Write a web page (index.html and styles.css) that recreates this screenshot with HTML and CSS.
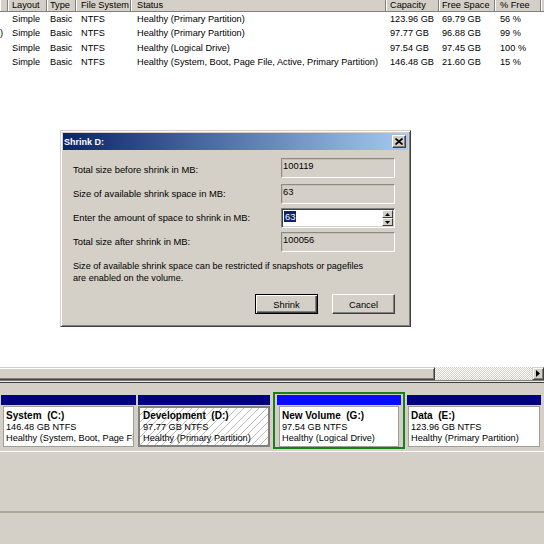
FILE: index.html
```html
<!DOCTYPE html>
<html>
<head>
<meta charset="utf-8">
<link rel="stylesheet" href="styles.css">
</head>
<body>
<div class="list">
  <div class="grid hdr">
    <div class="c"></div><div class="c">Layout</div><div class="c">Type</div><div class="c">File System</div><div class="c">Status</div><div class="c">Capacity</div><div class="c">Free Space</div><div class="c">% Free</div><div class="c"></div>
  </div>
  <div class="grid row">
    <div class="c vol"></div><div class="c">Simple</div><div class="c">Basic</div><div class="c">NTFS</div><div class="c">Healthy (Primary Partition)</div><div class="c">123.96 GB</div><div class="c">69.79 GB</div><div class="c">56 %</div><div class="c"></div>
  </div>
  <div class="grid row">
    <div class="c vol">)</div><div class="c">Simple</div><div class="c">Basic</div><div class="c">NTFS</div><div class="c">Healthy (Primary Partition)</div><div class="c">97.77 GB</div><div class="c">96.88 GB</div><div class="c">99 %</div><div class="c"></div>
  </div>
  <div class="grid row">
    <div class="c vol"></div><div class="c">Simple</div><div class="c">Basic</div><div class="c">NTFS</div><div class="c">Healthy (Logical Drive)</div><div class="c">97.54 GB</div><div class="c">97.45 GB</div><div class="c">100 %</div><div class="c"></div>
  </div>
  <div class="grid row">
    <div class="c vol"></div><div class="c">Simple</div><div class="c">Basic</div><div class="c">NTFS</div><div class="c">Healthy (System, Boot, Page File, Active, Primary Partition)</div><div class="c">146.48 GB</div><div class="c">21.60 GB</div><div class="c">15 %</div><div class="c"></div>
  </div>
</div>

<div class="hscroll">
  <div class="thumb"></div>
  <div class="track"></div>
  <div class="arrow"><svg width="4" height="7" viewBox="0 0 4 7"><path d="M0 0 L4 3.5 L0 7 Z" fill="#000"/></svg></div>
</div>
<div class="split"></div>

<div class="graph">
  <div class="disks">
    <div class="part sys">
      <div class="bar"></div>
      <div class="box"><b>System  (C:)</b><br>146.48 GB NTFS<br>Healthy (System, Boot, Page File, Active, Primary Partition)</div>
    </div>
    <div class="part dev">
      <div class="bar"></div>
      <div class="box hatch"><b>Development  (D:)</b><br>97.77 GB NTFS<br>Healthy (Primary Partition)</div>
    </div>
    <div class="part nv">
      <div class="green">
        <div class="bar bright"></div>
        <div class="box"><b>New Volume  (G:)</b><br>97.54 GB NTFS<br>Healthy (Logical Drive)</div>
      </div>
    </div>
    <div class="part data">
      <div class="bar"></div>
      <div class="box"><b>Data  (E:)</b><br>123.96 GB NTFS<br>Healthy (Primary Partition)</div>
    </div>
  </div>
  <div class="gap"></div>
  <div class="sline"></div>
</div>

<div class="dialog">
  <div class="title">
    <span class="ttext">Shrink D:</span>
    <div class="close"><svg width="8" height="7" viewBox="0 0 8 7"><path d="M0.5 0.5 L7.5 6.5 M7.5 0.5 L0.5 6.5" stroke="#000" stroke-width="1.7" fill="none"/></svg></div>
  </div>
  <div class="dbody">
    <div class="fields">
      <div class="lbl first">Total size before shrink in MB:</div>
      <div class="ro">100119</div>
      <div class="lbl">Size of available shrink space in MB:</div>
      <div class="ro">63</div>
      <div class="lbl">Enter the amount of space to shrink in MB:</div>
      <div class="edit">
        <div class="etext"><span class="selected">63</span></div>
        <div class="spin">
          <div class="sbtn"><svg width="5" height="3" viewBox="0 0 5 3"><path d="M2.5 0 L5 3 L0 3 Z" fill="#000"/></svg></div>
          <div class="sbtn"><svg width="5" height="3" viewBox="0 0 5 3"><path d="M0 0 L5 0 L2.5 3 Z" fill="#000"/></svg></div>
        </div>
      </div>
      <div class="lbl">Total size after shrink in MB:</div>
      <div class="ro">100056</div>
    </div>
    <p class="note">Size of available shrink space can be restricted if snapshots or pagefiles<br>are enabled on the volume.</p>
    <div class="buttons">
      <div class="btn default">Shrink</div>
      <div class="btn">Cancel</div>
    </div>
  </div>
</div>
</body>
</html>
```

FILE: styles.css
```css
* { box-sizing: border-box; }

body {
  margin: 0;
  width: 544px;
  height: 544px;
  overflow: hidden;
  position: relative;
  background: #d4d0c8;
  font-family: "Liberation Sans", Arial, sans-serif;
  font-size: 9.2px;
  color: #000;
}

/* ---------- volume list ---------- */
.list {
  height: 367px;
  background: #fff;
  overflow: hidden;
}

.grid {
  display: grid;
  grid-template-columns: 8px 39px 29px 55px 255px 53px 56px 46px 1fr;
  white-space: nowrap;
}

.hdr {
  height: 12px;
  background: #d4d0c8;
  border-bottom: 1px solid #808080;
}

.hdr .c {
  height: 11px;
  line-height: 11px;
  padding-left: 3px;
  border-right: 1px solid #808080;
  box-shadow: inset 1px 0 #fff;
  overflow: hidden;
}

.row .c {
  height: 14.33px;
  line-height: 14.33px;
  padding-left: 3px;
  overflow: hidden;
}

.grid .c:nth-child(2) { padding-left: 4px; }
.grid .c:nth-child(4) { padding-left: 5px; }
.grid .c:nth-child(5) { padding-left: 6px; }
.grid .c:nth-child(6) { padding-left: 4px; }
.grid .c:nth-child(8) { padding-left: 5px; }

.row .vol { padding-left: 0; }

/* ---------- horizontal scrollbar ---------- */
.hscroll {
  height: 13px;
  display: flex;
}

.thumb {
  width: 435px;
  background: #d4d0c8;
  border-top: 1px solid #d4d0c8;
  border-right: 1px solid #404040;
  border-bottom: 1px solid #404040;
  box-shadow: inset 0 1px #fff, inset -1px -1px #808080;
}

.track {
  flex: 1;
  background: repeating-conic-gradient(#d4d0c8 0 25%, #fff 0 50%) 0 0 / 2px 2px;
}

.arrow {
  width: 12px;
  display: flex;
  align-items: center;
  justify-content: center;
  background: #d4d0c8;
  border: 1px solid;
  border-color: #d4d0c8 #404040 #404040 #d4d0c8;
  box-shadow: inset 1px 1px #fff, inset -1px -1px #808080;
}

.split {
  height: 3px;
  border-top: 1px solid #808080;
  border-bottom: 1px solid #404040;
  background: #ece9e2;
}

/* ---------- graphical view ---------- */
.graph { padding-top: 9px; }

.disks {
  display: flex;
  height: 60px;
  border-bottom: 1px solid #fff;
}

.part { padding: 3px 1px 0; }
.part.sys { width: 137px; }
.part.dev { width: 134px; }
.part.nv { width: 134px; padding: 0 0 0 2px; }
.part.data { width: 138px; padding: 3px 2px 0; }

.bar {
  height: 10px;
  background: #000080;
}

.bar.bright { background: #0a0aff; }

.box {
  margin: 1px 2px 0;
  height: 41px;
  background: #fff;
  border: 1px solid #a19e96;
  padding: 3px 2px 0;
  line-height: 11px;
  white-space: pre;
  overflow: hidden;
}

.box b {
  font-weight: bold;
  font-size: 10px;
}

.part.data .box { margin: 1px 1px 0; }

.box.hatch {
  margin: 1px 0 0;
  border: 2px solid #808080;
  padding: 2px 3px 0;
  background: repeating-linear-gradient(135deg, #fff 0 4.5px, #bdbdbd 4.5px 5.3px);
}

.green {
  width: 132px;
  border: 2px solid #17801a;
  padding: 1px 2px 0;
}

.green .box { margin: 1px 2px 0; }

.gap { height: 59px; }

.sline {
  height: 2px;
  background: #aca899;
}

/* ---------- dialog ---------- */
.dialog {
  position: absolute;
  left: 60px;
  top: 130px;
  width: 351px;
  height: 197px;
  padding: 2px;
  background: #d4d0c8;
  border: 1px solid;
  border-color: #d4d0c8 #404040 #404040 #d4d0c8;
  box-shadow: inset 1px 1px #fff, inset -1px -1px #808080;
  font-size: 9.4px;
}

.title {
  height: 17px;
  display: flex;
  align-items: center;
  justify-content: space-between;
  padding: 0 2px 0 1px;
  background: linear-gradient(to right, #0a246a, #a6caf0);
}

.ttext {
  color: #fff;
  font-weight: bold;
  font-size: 9px;
}

.close {
  width: 14px;
  height: 13px;
  display: flex;
  align-items: center;
  justify-content: center;
  background: #d4d0c8;
  border: 1px solid;
  border-color: #fff #404040 #404040 #fff;
  box-shadow: inset -1px -1px #808080;
}

.dbody { padding: 8px 13px 0 10px; }

.fields {
  display: grid;
  grid-template-columns: 1fr 114px;
  grid-template-rows: 22px 20px 20px 20px;
  row-gap: 4px;
}

.lbl {
  align-self: center;
  line-height: 11px;
  padding-bottom: 2px;
  white-space: nowrap;
}

.lbl.first { align-self: start; padding: 6px 0 0; }

.ro {
  height: 20px;
  border: 1px solid;
  border-color: #8e8b84 #fff #fff #8e8b84;
  box-shadow: inset 1px 1px #c4c0b8;
  padding: 1px 0 0 1px;
  line-height: 11px;
}

.edit {
  height: 20px;
  display: flex;
  background: #fff;
  border: 1px solid;
  border-color: #808080 #fff #fff #808080;
  box-shadow: inset 1px 1px #404040, inset -1px -1px #d4d0c8;
  padding: 1px;
}

.etext {
  flex: 1;
  padding: 1px 0 0 1px;
  line-height: 11px;
}

.selected {
  background: #0a246a;
  color: #fff;
  padding: 0 1px;
}

.spin {
  width: 11px;
  display: flex;
  flex-direction: column;
}

.sbtn {
  height: 8px;
  display: flex;
  align-items: center;
  justify-content: center;
  background: #d4d0c8;
  border: 1px solid;
  border-color: #fff #404040 #404040 #fff;
}

.note {
  margin: 9px 0 0;
  font-size: 9.1px;
  line-height: 11.5px;
  white-space: nowrap;
}

.buttons {
  display: flex;
  justify-content: flex-end;
  gap: 14px;
  margin-top: 10px;
}

.btn {
  width: 63px;
  height: 20px;
  display: flex;
  align-items: center;
  justify-content: center;
  background: #d4d0c8;
  border: 1px solid;
  border-color: #fff #404040 #404040 #fff;
  box-shadow: inset -1px -1px #808080;
}

.btn.default {
  border: 1px solid #000;
  box-shadow: inset 1px 1px #fff, inset -1px -1px #404040, inset -2px -2px #808080;
}
```
